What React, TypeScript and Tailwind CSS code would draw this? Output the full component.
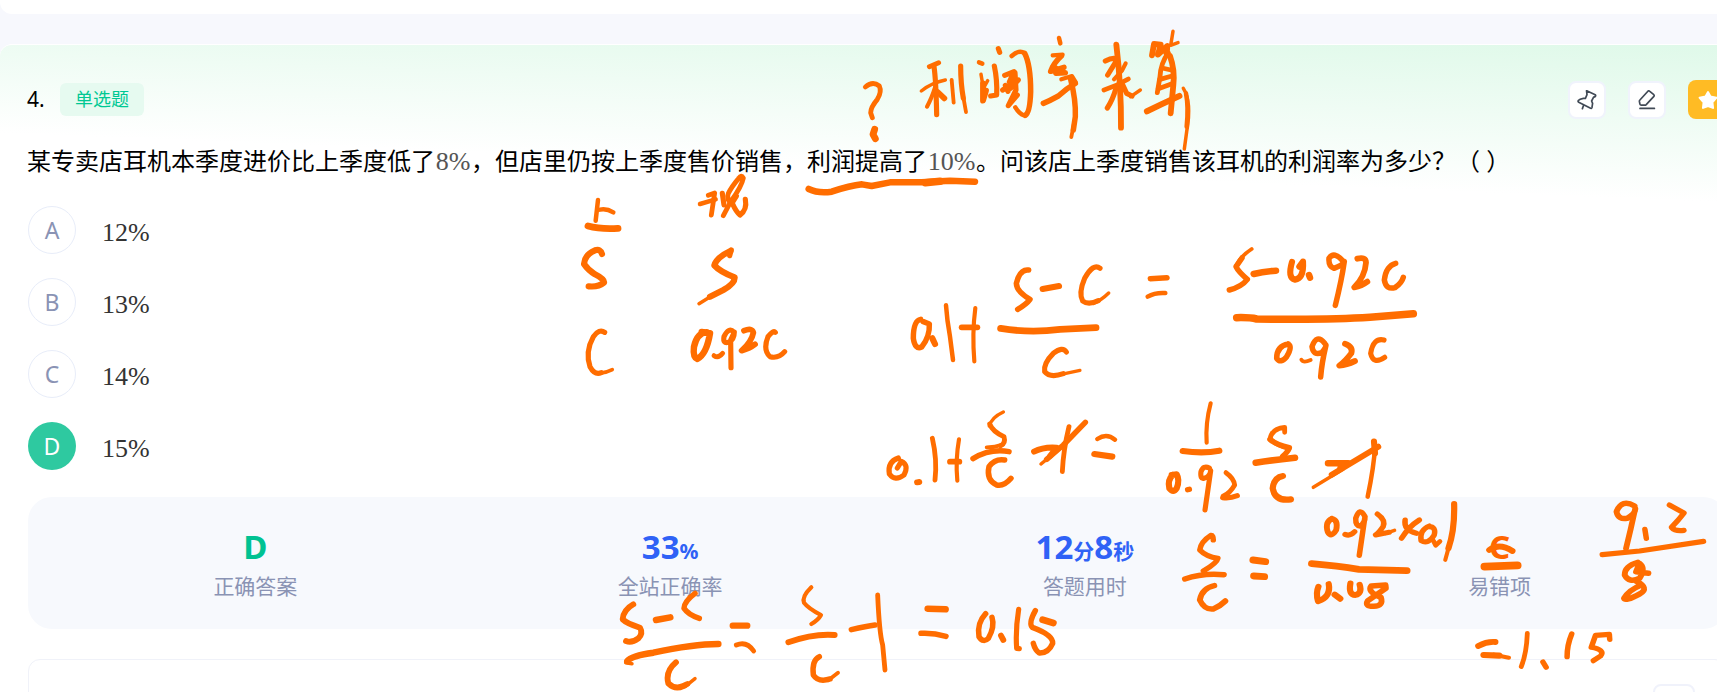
import React from "react";

type Ink = [number, string];

const SANS = "font-['Noto_Sans','Noto_Sans_CJK_SC',sans-serif]";

const titleInk: Ink[] = [
  [12, "M76 201Q98 182 118 198Q126 215 112 238Q92 262 92 278L97 293"],
  [18, "M104 328L99 343L106 356"],
  [12, "M268 140L296 128"],
  [13, "M282 140Q288 180 290 284"],
  [8, "M244 213Q275 188 316 180"],
  [10, "M286 200Q275 235 261 260"],
  [15, "M293 216L313 235"],
  [9, "M335 180L341 248"],
  [13, "M362 138Q362 190 370 235"],
  [9, "M368 220L378 276"],
  [11, "M417 127L427 131"],
  [8, "M423 163L430 205L443 182"],
  [15, "M429 190L429 242L438 212"],
  [13, "M475 86L479 97"],
  [13, "M463 138Q472 180 470 225L452 228"],
  [11, "M515 108Q538 88 554 100"],
  [14, "M554 100Q572 135 572 215Q570 278 556 286"],
  [11, "M556 286Q540 285 526 262"],
  [13, "M494 166L522 155L508 186M488 210L535 180L512 205M525 158L528 210L505 257L532 225M496 196L504 214"],
  [11, "M657 54L661 70"],
  [10, "M638 106L668 104"],
  [14, "M664 108Q640 130 632 154L672 142L648 160L676 158"],
  [13, "M640 138L656 150"],
  [10, "M664 178L696 168L708 188"],
  [14, "M706 190Q680 205 655 228Q630 242 610 250"],
  [14, "M692 178Q708 240 706 290L700 330"],
  [9, "M702 310L694 351"],
  [13, "M796 123Q820 110 832 118L803 165"],
  [15, "M829 74Q844 200 843 323"],
  [10, "M857 130L846 152L822 178"],
  [12, "M792 210Q830 198 865 177"],
  [13, "M828 205Q818 240 802 264"],
  [13, "M846 190L860 220L876 228"],
  [8, "M872 230L901 210"],
  [15, "M936 106L942 72L962 74L954 104L982 78L980 102"],
  [8, "M999 34Q995 60 992 76L1014 68"],
  [12, "M985 98Q962 130 960 170L952 218"],
  [15, "M990 108Q1005 150 1000 195L992 280"],
  [12, "M966 144L993 150M960 178L996 168M955 206L1000 190"],
  [16, "M921 274Q965 252 1018 228"],
  [8, "M1030 205Q1056 245 1040 335L1033 387"],
  [11, "M1038 220Q1046 260 1040 320"],
  [17, "M-94 507Q-65 521 -25 515Q30 497 66 493L95 498L150 487L245 487L330 482L405 485"],
  [20, "M256 488L300 484"],
];

const givenInk: Ink[] = [
  [11, "M114 120L107 182"],
  [11, "M120 149Q140 145 160 157"],
  [18, "M84 198Q120 208 174 205"],
  [16, "M126 282Q122 266 105 271Q74 284 72 312Q84 330 105 343Q135 358 132 368Q115 382 86 379"],
  [13, "M134 517Q118 505 100 530Q75 575 90 620Q104 646 124 638"],
  [8, "M118 640Q140 638 157 629"],
  [12, "M445 106L464 99L454 165"],
  [11, "M420 132L467 118"],
  [13, "M487 100L492 135"],
  [12, "M490 167L512 125Q545 80 550 54Q544 42 536 55Q515 80 505 100Q498 118 515 132L530 108"],
  [13, "M518 132Q528 155 540 165Q562 150 556 118"],
  [13, "M514 270L509 287"],
  [16, "M511 273Q470 292 463 316Q480 335 524 352Q525 370 490 390L450 410"],
  [8, "M475 395L417 431"],
  [17, "M440 517Q412 518 402 560Q398 592 412 597Q440 582 450 520L425 516"],
  [12, "M462 587Q475 596 488 580"],
  [13, "M522 516Q506 500 492 530Q488 552 505 547Q523 540 523 516L512 540L513 623"],
  [15, "M552 512Q576 502 580 518Q575 545 545 572Q570 565 585 553"],
  [13, "M646 517Q640 510 624 530Q608 570 630 590Q655 597 674 575"],
];

const setupInk: Ink[] = [
  [14, "M122 268Q100 272 100 325Q105 360 125 351Q150 320 148 282L130 275"],
  [16, "M157 325L165 342"],
  [11, "M198 226Q201 270 210 320L219 390"],
  [15, "M245 292L292 292"],
  [10, "M286 234Q276 310 283 394"],
  [14, "M446 120Q420 116 409 160Q410 185 450 208Q440 222 413 238"],
  [16, "M488 177L537 168"],
  [13, "M660 115Q640 98 614 145Q595 190 608 213Q625 226 655 212"],
  [8, "M640 220Q665 210 686 189"],
  [18, "M362 295Q450 310 540 298L648 293"],
  [13, "M559 366Q548 348 520 370Q490 400 494 425Q510 445 550 431"],
  [7, "M540 434L600 421"],
  [13, "M55 684Q22 695 28 732Q45 755 72 735Q88 705 64 694L52 714"],
  [15, "M111 757L118 756"],
  [12, "M157 625Q172 690 165 750"],
  [15, "M210 695L238 695"],
  [10, "M237 628Q226 690 232 752"],
  [8, "M370 546Q335 562 328 588"],
  [12, "M329 582Q338 605 372 620Q378 640 362 647"],
  [9, "M368 644Q345 652 320 652"],
  [14, "M279 686Q330 655 387 665"],
  [14, "M374 690Q345 685 327 710Q318 750 350 765Q372 770 393 745"],
  [15, "M462 665Q490 650 530 653L510 678"],
  [14, "M500 688L550 645L616 577"],
  [8, "M483 702L540 655"],
  [12, "M567 590Q550 660 547 725"],
  [11, "M652 627Q680 608 705 629"],
  [16, "M643 672L697 680"],
];

const equalsInk: Ink[] = [
  [14, "M61 146L111 143"],
  [11, "M53 200Q75 187 106 189"],
  [9, "M365 57Q330 80 318 108"],
  [14, "M336 84L318 110Q325 125 352 148Q335 170 298 180"],
  [17, "M371 132Q400 124 438 122"],
  [16, "M486 96Q472 145 495 149Q522 145 519 95L508 110"],
  [17, "M537 135L540 143"],
  [14, "M640 94Q612 62 597 85Q595 110 612 115Q640 105 643 94Q635 150 616 226"],
  [15, "M682 86Q708 80 708 98Q705 140 673 172Q695 168 712 155"],
  [14, "M797 100Q768 108 763 150Q768 180 795 173Q815 160 820 142"],
  [20, "M320 263Q360 262 380 267Q600 270 720 262L850 251"],
  [14, "M475 342Q440 348 440 385Q452 402 470 380Q488 350 475 342"],
  [9, "M514 389Q520 400 542 390"],
  [14, "M584 340Q560 310 546 350Q550 378 575 368Q590 350 588 345Q575 400 572 441"],
  [15, "M645 341Q670 350 664 370Q645 395 628 407Q650 405 675 393"],
  [13, "M762 330Q730 322 722 370Q730 405 764 382"],
  [10, "M242 520Q226 580 230 638"],
  [16, "M158 663Q220 672 268 662"],
  [16, "M128 735Q112 750 118 775Q130 790 140 775Q150 750 140 733L125 735"],
  [14, "M173 779L178 778"],
  [13, "M238 714Q220 705 213 725Q210 748 222 745Q240 740 242 722L225 840"],
  [12, "M288 728Q312 745 314 765Q300 790 280 798"],
  [13, "M278 803Q300 806 322 797"],
  [12, "M464 607L464 592Q425 595 420 628Q440 647 478 655"],
  [14, "M420 628Q440 645 478 653Q475 665 458 679"],
  [17, "M377 698Q430 690 495 683"],
  [16, "M459 738Q432 742 428 775Q435 815 483 808"],
  [17, "M594 700L655 700L632 714"],
  [15, "M605 734L745 650"],
  [8, "M550 772L640 717"],
  [16, "M732 635L735 670"],
  [11, "M735 650Q732 710 713 800"],
];

const resultInk: Ink[] = [
  [15, "M100 343Q70 360 68 388Q80 400 120 413Q130 430 115 445Q95 460 78 453"],
  [17, "M168 390L211 382"],
  [14, "M285 310Q252 335 252 355Q265 375 298 385"],
  [17, "M82 513Q95 497 160 488Q280 462 355 462"],
  [8, "M77 518L96 521"],
  [15, "M228 517Q195 545 205 580Q225 600 250 588L262 582"],
  [8, "M255 590L285 566"],
  [16, "M398 407L442 407"],
  [12, "M409 465Q440 452 461 483"],
  [10, "M634 292Q605 320 612 338Q625 355 663 375Q655 390 634 402"],
  [15, "M565 457Q640 430 704 435"],
  [14, "M658 500Q635 510 640 555Q655 578 690 567"],
  [9, "M685 571L714 548"],
  [14, "M754 419Q800 408 825 405"],
  [12, "M833 315Q838 430 848 465L855 540"],
  [17, "M983 356L1037 358"],
  [14, "M963 430Q1000 428 1038 439"],
  [14, "M1157 371Q1130 400 1137 440Q1150 460 1165 445Q1185 410 1176 382"],
  [15, "M1203 437L1210 450"],
  [13, "M1256 358Q1246 420 1250 475L1258 476"],
  [14, "M1306 362Q1285 400 1297 412Q1360 435 1358 460Q1345 490 1318 489Q1305 480 1300 460"],
  [18, "M1328 389L1360 399"],
];

const answerInk: Ink[] = [
  [13, "M150 180Q150 165 143 166Q115 185 112 210Q130 230 163 235Q160 250 122 273"],
  [14, "M70 297Q120 278 180 284"],
  [14, "M153 317Q118 325 112 360Q125 390 150 387Q170 378 184 363"],
  [18, "M262 240L297 245"],
  [18, "M264 288L294 290"],
  [14, "M484 116Q464 125 472 155Q482 175 496 150Q502 120 484 116"],
  [13, "M521 163Q535 170 548 155"],
  [13, "M577 110Q562 78 551 115Q550 140 565 138Q578 125 577 110L561 226"],
  [13, "M612 102Q636 120 628 140Q615 160 607 165L645 157"],
  [8, "M635 160L660 151"],
  [13, "M690 120Q685 150 722 160M730 120Q700 140 680 175"],
  [13, "M758 138Q730 150 735 182Q755 195 772 165Q778 140 757 140"],
  [11, "M770 183L776 196L788 184"],
  [15, "M828 72Q830 150 812 205"],
  [9, "M816 190L803 240"],
  [18, "M427 251Q500 258 560 268L695 272"],
  [15, "M475 312Q482 350 445 364Q438 340 446 320"],
  [16, "M492 344L507 356"],
  [15, "M536 310Q530 345 550 345Q570 340 562 314"],
  [14, "M592 322Q588 338 622 352Q630 378 602 379Q575 380 585 362L636 325L635 315L595 318"],
  [15, "M927 210Q955 188 992 213"],
  [21, "M914 260L1006 256"],
  [15, "M896 498Q920 484 944 486"],
  [16, "M911 525L955 527"],
  [10, "M940 524L982 533"],
  [11, "M1034 460Q1032 520 1017 560"],
  [13, "M1078 546L1087 562"],
  [13, "M1159 462Q1146 495 1146 530"],
  [13, "M1266 478L1265 463L1226 466L1214 502Q1255 510 1240 528L1220 542"],
  [14, "M1336 78Q1300 55 1285 95Q1290 120 1315 115Q1340 100 1338 85Q1325 150 1312 205"],
  [13, "M1365 148L1369 175"],
  [13, "M1434 75L1475 99Q1460 120 1440 142Q1450 155 1475 151"],
  [13, "M1245 224L1350 213Q1430 200 1530 184"],
  [14, "M1345 247Q1308 258 1308 285Q1320 310 1350 295Q1368 265 1350 250L1340 275L1375 280"],
  [14, "M1340 303Q1380 325 1350 342Q1310 365 1306 355Q1320 330 1355 315"],
];

function InkGroup({ at, items }: { at: string; items: Ink[] }) {
  return (
    <g transform={at}>
      {items.map(([w, d], i) => (
        <path key={i} d={d} strokeWidth={w + 2.5} />
      ))}
    </g>
  );
}

function Annotations() {
  return (
    <svg
      className="pointer-events-none absolute left-0 top-0"
      width="1717"
      height="692"
      viewBox="0 0 1717 692"
      fill="none"
      stroke="#ff6d00"
      strokeLinecap="round"
      strokeLinejoin="round"
    >
      <InkGroup at="translate(840 20) scale(.33333)" items={titleInk} />
      <InkGroup at="translate(560 160) scale(.33333)" items={givenInk} />
      <InkGroup at="translate(880 230) scale(.33333)" items={setupInk} />
      <InkGroup at="translate(1130 230) scale(.33333)" items={equalsInk} />
      <InkGroup at="translate(600 490) scale(.33333)" items={resultInk} />
      <InkGroup at="translate(1160 480) scale(.35523 .33333)" items={answerInk} />
    </svg>
  );
}

function Option({ letter, value, chosen }: { letter: string; value: string; chosen?: boolean }) {
  return (
    <li className="flex h-12 items-center">
      <span
        className={
          chosen
            ? "flex size-12 items-center justify-center rounded-full bg-[#2ec9a0] text-[23px] text-white"
            : "flex size-12 items-center justify-center rounded-full border border-[#e8edf9] text-[23px] text-[#8a93b4]"
        }
      >
        {letter}
      </span>
      <span className="ml-[26px] pt-1.5 font-['Liberation_Serif',serif] text-[26px] leading-none text-[#333]">{value}</span>
    </li>
  );
}

function Stat({ label, children }: { label: string; children: React.ReactNode }) {
  return (
    <div className="flex flex-1 flex-col items-center">
      <div className="flex h-11 items-baseline text-[33px] font-bold leading-[44px]">{children}</div>
      <div className="pt-px text-[21px] leading-8 text-[#8a93b4]">{label}</div>
    </div>
  );
}

export default function App() {
  return (
    <div className={`relative h-[692px] w-full overflow-hidden bg-[#f7f8fd] text-black ${SANS}`}>
      <div className="h-3.5 w-[1753px] rounded-b-xl bg-white" />
      <main className="mt-[30px] h-[700px] w-[1753px] rounded-xl border-t border-white bg-white bg-[linear-gradient(182.3deg,#dff9e9_0%,#ffffff_70%)] bg-[length:1753px_156px] bg-no-repeat pl-7 pr-[26px]">
        <header className="flex h-[92px] items-center pt-[17px]">
          <span className="-ml-px w-[33px] text-[21px]">4.</span>
          <span className="flex h-[33px] w-[84px] items-center justify-center rounded-md bg-[#e6faf0] text-[18px] text-[#00c893]">
            单选题
          </span>
          <div className="ml-auto flex items-center gap-[22px]">
            <button className="flex size-[38px] items-center justify-center rounded-lg border-2 border-[#f0f3fc] bg-white">
              <svg width="20" height="20" viewBox="0 0 20 20" fill="none" stroke="#414a56" strokeWidth="1.7" strokeLinejoin="round" strokeLinecap="round">
                <path d="M9.6 1.2Q9.3 .6 10.2 .9L18.2 4.7Q19 5.4 18.3 6.4Q17.8 7 16.6 7.2L14.6 11L15.6 13.4L15 17.4Q14.6 18.6 13.6 18.2L2.2 12.6Q.6 11.8 1.3 10.6Q2.6 8.7 6.4 8.3H8.4L10 4.6ZM6.6 15.2L5.4 18.6" />
              </svg>
            </button>
            <button className="flex size-[38px] items-center justify-center rounded-lg border-2 border-[#f0f3fc] bg-white">
              <svg width="20" height="20" viewBox="0 0 20 20" fill="none" stroke="#414a56" strokeWidth="1.7" strokeLinejoin="round" strokeLinecap="round">
                <path d="M10.9 1.2Q11.7 .5 12.5 1.2L16.8 4.7Q17.5 5.5 16.9 6.4L9.2 14.6Q8.6 15.2 7.8 15.2H4.3Q3.2 15.2 2.9 14.1L2.4 11.4Q2.3 10.6 2.9 10ZM3 18.4H17.4" />
              </svg>
            </button>
            <button className="flex size-[39px] items-center justify-center rounded-lg bg-[#ffbb24]">
              <svg width="22" height="22" viewBox="0 0 24 24" fill="#fff" stroke="#fff" strokeWidth="2.4" strokeLinejoin="round">
                <path d="M12 3.5l2.6 4.8 6.4 1.2-4.3 5 .7 6-5.4-2-5.4 2 .7-6L3 9.500l6.400-1.200z" />
              </svg>
            </button>
          </div>
        </header>
        <p className="-ml-px flex h-12 items-center whitespace-pre text-2xl leading-none">
          <span>某专卖店耳机本季度进价比上季度低了</span>
          <span className="w-9 pt-0.5 text-center font-['Liberation_Serif',serif] text-[26px] text-[#555]">8%</span>
          <span>，但店里仍按上季度售价销售，利润提高了</span>
          <span className="w-[49px] pt-0.5 text-center font-['Liberation_Serif',serif] text-[26px] text-[#555]">10%</span>
          <span>。问该店上季度销售该耳机的利润率为多少？（ ）</span>
        </p>
        <ul className="mt-[21px] flex flex-col gap-6">
          <Option letter="A" value="12%" />
          <Option letter="B" value="13%" />
          <Option letter="C" value="14%" />
          <Option letter="D" value="15%" chosen />
        </ul>
        <section className="mt-[27px] flex h-[132px] rounded-3xl bg-[#f7f9fd] px-5 pt-7">
          <Stat label="正确答案">
            <span className="text-[#00c292]">D</span>
          </Stat>
          <Stat label="全站正确率">
            <span className="text-[#2f62f6]">33</span>
            <span className="text-[21px] text-[#2f62f6]">%</span>
          </Stat>
          <Stat label="答题用时">
            <span className="text-[#2f62f6]">12</span>
            <span className="text-[21px] text-[#2f62f6]">分</span>
            <span className="text-[#2f62f6]">8</span>
            <span className="text-[21px] text-[#2f62f6]">秒</span>
          </Stat>
          <Stat label="易错项">
            <span className="text-[#ff6600]">C</span>
          </Stat>
        </section>
        <section className="mt-[30px] flex h-20 justify-end rounded-xl border border-[#f0f2f9] pr-[31px] pt-6">
          <span className="h-10 w-[42px] rounded-lg border-2 border-[#f0f2fb]" />
        </section>
      </main>
      <Annotations />
    </div>
  );
}
